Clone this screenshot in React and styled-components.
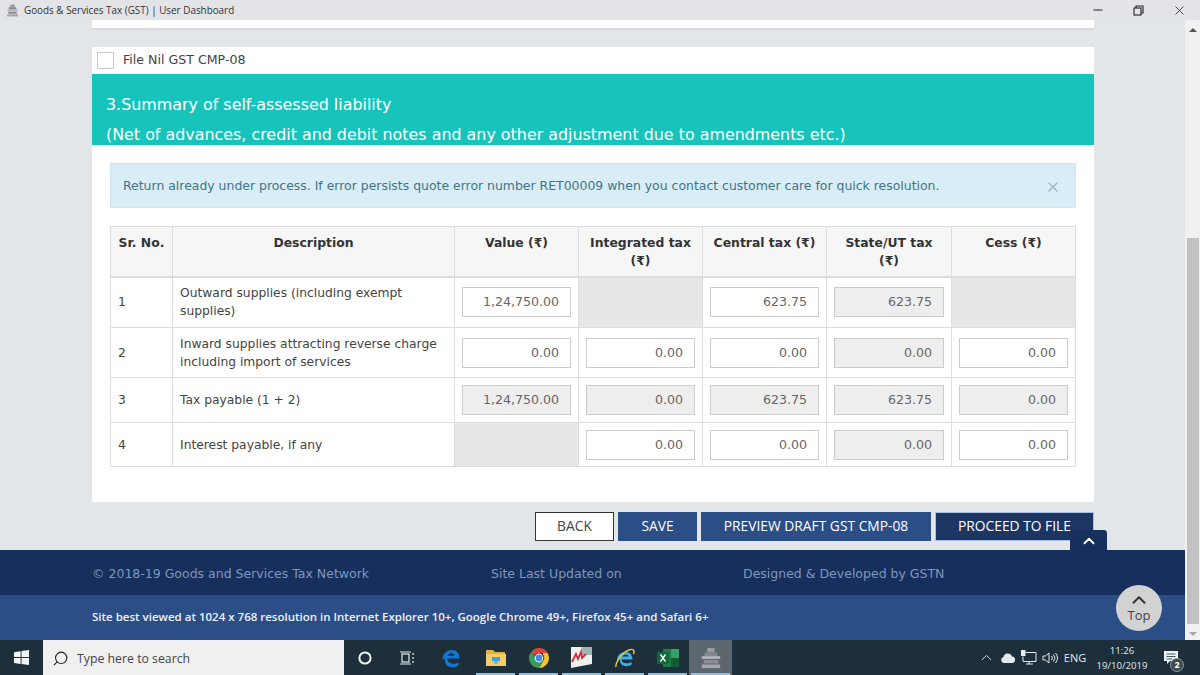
import React from 'react'
import styled, { createGlobalStyle } from 'styled-components'
import { ChevronUp, Search, Minus, X } from 'lucide-react'

const GlobalStyle = createGlobalStyle`
    html, body {
        margin: 0;
        padding: 0;
        height: 100%;
        overflow: hidden;
    }
    * {
        box-sizing: border-box;
    }
`

const rows = [
    {
        no: '1',
        desc: 'Outward supplies (including exempt supplies)',
        height: 51,
        cells: [['1,24,750.00'], null, ['623.75'], ['623.75', true], null],
    },
    {
        no: '2',
        desc: 'Inward supplies attracting reverse charge including import of services',
        height: 50,
        cells: [['0.00'], ['0.00'], ['0.00'], ['0.00', true], ['0.00']],
    },
    {
        no: '3',
        desc: 'Tax payable (1 + 2)',
        height: 45,
        cells: [['1,24,750.00', true], ['0.00', true], ['623.75', true], ['623.75', true], ['0.00', true]],
    },
    {
        no: '4',
        desc: 'Interest payable, if any',
        height: 44,
        cells: [null, ['0.00'], ['0.00'], ['0.00', true], ['0.00']],
    },
]

const headers = ['Sr. No.', 'Description', 'Value (₹)', 'Integrated tax (₹)', 'Central tax (₹)', 'State/UT tax (₹)', 'Cess (₹)']
const colWidths = [62, 282, 124, 124, 124, 125, 124]
const footerBits = ['© 2018-19 Goods and Services Tax Network', 'Site Last Updated on', 'Designed & Developed by GSTN']

function Emblem({ size }) {
    return (
        <svg width={size} height={size} viewBox="0 0 24 24">
            <rect x="8" y="1" width="8" height="5" fill="#9a9ca3" />
            <rect x="5" y="6" width="14" height="4" fill="#85878e" />
            <rect x="2" y="10" width="20" height="3" fill="#b5b7bc" />
            <rect x="4" y="14" width="16" height="4" fill="#8b8d94" />
            <rect x="2" y="19" width="20" height="4" fill="#a5a7ad" />
        </svg>
    )
}

function RestoreIcon() {
    return (
        <svg width="11" height="11" viewBox="0 0 11 11" fill="none" stroke="#222" strokeWidth="1.1">
            <rect x="1" y="3" width="7" height="7" />
            <path d="M3 3V1h7v7H8" />
        </svg>
    )
}

function WindowsLogo() {
    return (
        <svg width="15" height="15" viewBox="0 0 15 15" fill="#f2f5f6">
            <path d="M0 2.2 6.6 1.2v5.9H0zM7.5 1.1 15 0v7.1H7.5zM0 8h6.6v5.9L0 12.9zM7.5 8H15v7l-7.5-1.1z" />
        </svg>
    )
}

function CortanaIcon() {
    return (
        <svg width="16" height="16" viewBox="0 0 16 16" fill="none" stroke="#f0f3f4" strokeWidth="2">
            <circle cx="8" cy="8" r="5.6" />
        </svg>
    )
}

function TaskViewIcon() {
    return (
        <svg width="16" height="14" viewBox="0 0 16 14" fill="none" stroke="#e8ecee" strokeWidth="1.2">
            <rect x="3" y="3" width="7" height="8" />
            <path d="M1 1h11M1 13h11M14 2v2M14 6v2M14 10v2" />
        </svg>
    )
}

function EdgeIcon() {
    return (
        <svg width="22" height="22" viewBox="0 0 22 22" fill="none">
            <path d="M2.5 13C2.5 6.5 7 3 11.5 3c5 0 8 3.4 8 8.6H7.2c.2 5 6.8 6.6 11.2 3.6v3.6c-5.6 3-14.2 1.4-13.6-6.6C3.6 10.800 3 11.800 2.500 13z" fill="#0f78d4" />
            <path d="M7.500 8.800h7c0-3-4.800-3.800-7 0z" fill="#1c2e39" />
        </svg>
    )
}

function ExplorerIcon() {
    return (
        <svg width="20" height="18" viewBox="0 0 20 18">
            <path d="M0 1h7l2 2h10v3H0z" fill="#e2b33f" />
            <rect y="5" width="20" height="12" fill="#f3cf6b" />
            <rect x="6" y="8" width="8" height="4" fill="#3f9edb" />
            <rect x="8" y="12" width="4" height="3" fill="#6bbbe8" />
        </svg>
    )
}

function ChromeIcon() {
    return (
        <svg width="20" height="20" viewBox="0 0 20 20">
            <path d="M10 0a10 10 0 0 1 8.660 5H10a5 5 0 0 0-4.600 3L2.500 3.400A10 10 0 0 1 10 0z" fill="#d9453a" />
            <path d="M18.660 5A10 10 0 0 1 10 20l4.300-7.500A5 5 0 0 0 14 6.500V5z" fill="#f5c32c" />
            <path d="M10 20A10 10 0 0 1 2.500 3.400L6.800 11A5 5 0 0 0 14.300 12.500z" fill="#3a9b52" />
            <circle cx="10" cy="10" r="4.400" fill="#fff" />
            <circle cx="10" cy="10" r="3.400" fill="#4a87e8" />
        </svg>
    )
}

function MargIcon() {
    return (
        <svg width="21" height="21" viewBox="0 0 21 21">
            <path d="M0 0h21v17L0 21z" fill="#eef0ee" />
            <path d="M11 0h10v8H9z" fill="#9fb6b4" />
            <path d="M1 15 5 7l2 5 3-7 1 6 4-4" fill="none" stroke="#d22a35" strokeWidth="1.800" />
        </svg>
    )
}

function IEIcon() {
    return (
        <svg width="22" height="22" viewBox="0 0 22 22" fill="none">
            <path d="M3 14c0-6 4-9 8.500-9 4.500 0 7 3 7 7.500H7.500c.2 4 6 5 10 2.500v3c-5 2.500-12.500 1-11.500-6" fill="#3ab1e8" />
            <path d="M8 9.500h6.500c0-2.600-4.800-3-6.500 0z" fill="#1c2e39" />
            <path d="M2 20C1 17 7 6 15 3c4-1.500 6 0 4.500 4" stroke="#e9c643" strokeWidth="1.400" />
        </svg>
    )
}

function ExcelIcon() {
    return (
        <svg width="22" height="18" viewBox="0 0 22 18">
            <rect x="6" y="0" width="16" height="18" fill="#1f7a45" />
            <rect x="14" y="0" width="8" height="9" fill="#35a268" />
            <rect x="14" y="9" width="8" height="9" fill="#135c34" />
            <rect x="0" y="3" width="12" height="12" fill="#0f6a3a" />
            <path d="M3.500 5.500 8.500 12.500M8.500 5.500 3.500 12.500" stroke="#fff" strokeWidth="1.400" />
        </svg>
    )
}

function CloudIcon() {
    return (
        <svg width="16" height="10" viewBox="0 0 16 10" fill="#e6eaec">
            <path d="M4 10a3 3 0 0 1-.6-5.900A4.500 4.500 0 0 1 12 3.500 3.300 3.300 0 0 1 12.500 10z" />
        </svg>
    )
}

function NetworkIcon() {
    return (
        <svg width="16" height="15" viewBox="0 0 16 15" fill="none" stroke="#e6eaec" strokeWidth="1">
            <path d="M4.500 2.500H15v9H2v-5M8 11.500V14M5 14h7" />
            <rect x="0.500" y="0.500" width="3.500" height="5" fill="#e6eaec" />
        </svg>
    )
}

function VolumeIcon() {
    return (
        <svg width="16" height="14" viewBox="0 0 16 14" fill="none" stroke="#e6eaec" strokeWidth="1">
            <path d="M1 5h2.500L7 2v10L3.500 9H1zM9.500 5a3 3 0 0 1 0 4M11.500 3.500a5.500 5.500 0 0 1 0 7M13.500 2a8 8 0 0 1 0 10" />
        </svg>
    )
}

function NotificationIcon() {
    return (
        <svg width="14" height="14" viewBox="0 0 14 14">
            <path d="M0 0h14v10H6l-3 3v-3H0z" fill="#f0f3f4" />
            <path d="M2.500 3h9M2.500 5.500h9M2.500 8h6" stroke="#1c2e39" strokeWidth="0.800" />
        </svg>
    )
}

function App() {
    return (
        <Screen>
            <GlobalStyle />
            <TitleBar>
                <TitleLeft>
                    <Emblem size={13} />
                    <span>Goods &amp; Services Tax (GST) | User Dashboard</span>
                </TitleLeft>
                <WindowControls>
                    <WindowButton><Minus size={14} color="#222" /></WindowButton>
                    <WindowButton><RestoreIcon /></WindowButton>
                    <WindowButton><X size={15} color="#222" strokeWidth={1.3} /></WindowButton>
                </WindowControls>
            </TitleBar>

            <Viewport>
                <Page>
                    <Content>
                        <TopStrip />
                        <NilRow>
                            <CheckBox />
                            <NilLabel>File Nil GST CMP-08</NilLabel>
                        </NilRow>
                        <SectionHead>
                            <div>3.Summary of self-assessed liability</div>
                            <div>(Net of advances, credit and debit notes and any other adjustment due to amendments etc.)</div>
                        </SectionHead>
                        <Panel>
                            <Alert>
                                <span>Return already under process. If error persists quote error number RET00009 when you contact customer care for quick resolution.</span>
                                <X size={16} color="#a9b6bd" strokeWidth={2.4} />
                            </Alert>
                            <Table>
                                <colgroup>
                                    {colWidths.map((w, i) => <col key={i} width={w} />)}
                                </colgroup>
                                <thead>
                                    <tr>
                                        {headers.map(h => <Th key={h}>{h}</Th>)}
                                    </tr>
                                </thead>
                                <tbody>
                                    {rows.map(row => (
                                        <tr key={row.no} height={row.height}>
                                            <Td>{row.no}</Td>
                                            <Td>{row.desc}</Td>
                                            {row.cells.map((cell, i) => (
                                                <Td key={i} $blank={!cell}>
                                                    {cell && <Amount $locked={cell[1]}>{cell[0]}</Amount>}
                                                </Td>
                                            ))}
                                        </tr>
                                    ))}
                                </tbody>
                            </Table>
                        </Panel>
                        <Actions>
                            <ActionButton $kind="plain">BACK</ActionButton>
                            <ActionButton $width={79}>SAVE</ActionButton>
                            <ActionButton $width={230}>PREVIEW DRAFT GST CMP-08</ActionButton>
                            <ActionButton $kind="dark" $width={159}>PROCEED TO FILE</ActionButton>
                        </Actions>
                    </Content>

                    <Footer>
                        <BackTab><ChevronUp size={18} color="#fff" strokeWidth={2.5} /></BackTab>
                        <FooterTop>
                            {footerBits.map(t => <span key={t}>{t}</span>)}
                        </FooterTop>
                        <FooterBottom>
                            Site best viewed at 1024 x 768 resolution in Internet Explorer 10+, Google Chrome 49+, Firefox 45+ and Safari 6+
                            <TopCircle>
                                <ChevronUp size={22} color="#333" strokeWidth={2.2} />
                                <span>Top</span>
                            </TopCircle>
                        </FooterBottom>
                    </Footer>
                </Page>
                <ScrollBar>
                    <ScrollArrow $up />
                    <ScrollThumb />
                    <ScrollArrow />
                </ScrollBar>
            </Viewport>

            <TaskBar>
                <StartButton><WindowsLogo /></StartButton>
                <SearchBox>
                    <Search size={17} color="#222" strokeWidth={1.5} style={{ transform: 'scaleX(-1)' }} />
                    <span>Type here to search</span>
                </SearchBox>
                <TaskSlot $width={42}><CortanaIcon /></TaskSlot>
                <TaskSlot $width={42}><TaskViewIcon /></TaskSlot>
                <TaskSlot $width={46}><EdgeIcon /></TaskSlot>
                <TaskSlot $running><ExplorerIcon /></TaskSlot>
                <TaskSlot $running><ChromeIcon /></TaskSlot>
                <TaskSlot $running><MargIcon /></TaskSlot>
                <TaskSlot $running><IEIcon /></TaskSlot>
                <TaskSlot $running><ExcelIcon /></TaskSlot>
                <TaskSlot $running $active><Emblem size={22} /></TaskSlot>
                <Tray>
                    <TrayItem><ChevronUp size={17} color="#e6eaec" strokeWidth={1.3} /></TrayItem>
                    <TrayItem><CloudIcon /></TrayItem>
                    <TrayItem><NetworkIcon /></TrayItem>
                    <TrayItem><VolumeIcon /></TrayItem>
                    <Lang>ENG</Lang>
                    <Clock>
                        <span>11:26</span>
                        <span>19/10/2019</span>
                    </Clock>
                    <Notify>
                        <NotificationIcon />
                        <NotifyBadge>2</NotifyBadge>
                    </Notify>
                </Tray>
            </TaskBar>
        </Screen>
    )
}

const Screen = styled.div`
    width: 1200px;
    height: 675px;
    display: flex;
    flex-direction: column;
    overflow: hidden;
    background: #e3e6e9;
    font-family: 'DejaVu Sans', Verdana, sans-serif;
`

const TitleBar = styled.div`
    height: 20px;
    flex: none;
    display: flex;
    justify-content: space-between;
    align-items: center;
    background: #e2e4e7;
    padding-left: 6px;
    font-family: 'Open Sans', 'Noto Sans', sans-serif;
    font-size: 9.9px;
    color: #333;
`

const TitleLeft = styled.div`
    display: flex;
    align-items: center;
    gap: 5px;
`

const WindowControls = styled.div`
    display: flex;
`

const WindowButton = styled.div`
    width: 41px;
    height: 20px;
    display: flex;
    align-items: center;
    justify-content: center;
`

const Viewport = styled.div`
    flex: 1;
    min-height: 0;
    display: flex;
`

const Page = styled.div`
    width: 1185px;
    display: flex;
    flex-direction: column;
`

const Content = styled.div`
    flex: 1;
    padding: 0 91px 0 92px;
`

const TopStrip = styled.div`
    height: 9px;
    background: #fff;
    border-bottom: 1px solid #d8dadd;
    margin-bottom: 18px;
    box-shadow: 0 1px 0 #d8dadd;
`

const NilRow = styled.div`
    height: 27px;
    background: #fff;
    display: flex;
    align-items: center;
    gap: 9px;
    padding-left: 5px;
    font-size: 12.6px;
    color: #444;
`

const NilLabel = styled.span`
    margin-bottom: 2px;
`

const CheckBox = styled.div`
    width: 17px;
    height: 17px;
    border: 1px solid #ccc;
    background: #fff;
`

const SectionHead = styled.div`
    height: 71px;
    background: #17c4bb;
    color: #fff;
    padding: 16px 14px 0;
    font-size: 15.9px;
    line-height: 30px;
`

const Panel = styled.div`
    height: 357px;
    background: #fff;
    padding: 18px 18px 0;
`

const Alert = styled.div`
    height: 45px;
    display: flex;
    justify-content: space-between;
    align-items: center;
    padding: 0 14px 0 12px;
    margin-bottom: 18px;
    background: #d9edf7;
    border: 1px solid #cfe6f2;
    color: #3f7488;
    font-size: 12.45px;

    svg {
        margin-top: 3px;
    }
`

const Table = styled.table`
    width: 965px;
    table-layout: fixed;
    border-collapse: collapse;
    font-size: 12.3px;
    color: #444;
`

const Th = styled.th`
    height: 50px;
    background: #f6f6f6;
    border: 1px solid #ddd;
    border-bottom-width: 2px;
    padding: 7px 7.500px 0;
    vertical-align: top;
    line-height: 18px;
    font-size: 12.4px;
    color: #333;
    text-align: center;
`

const Td = styled.td`
    border: 1px solid #ddd;
    padding: 0 7px;
    line-height: 18px;
    vertical-align: middle;
    background: ${p => (p.$blank ? '#e7e7e7' : '#fff')};
`

const Amount = styled.div`
    height: 30px;
    line-height: 28px;
    text-align: right;
    padding-right: 11px;
    border: 1px solid #ccc;
    background: ${p => (p.$locked ? '#eeeeee' : '#fff')};
    color: #666;
    font-size: 12.6px;
`

const Actions = styled.div`
    height: 48px;
    display: flex;
    justify-content: flex-end;
    align-items: flex-start;
    gap: 4px;
    padding-top: 10px;
`

const buttonBg = { plain: '#fff', dark: '#1d3562', normal: '#2c4e86' }

const ActionButton = styled.div`
    width: ${p => p.$width || 79}px;
    height: 29px;
    display: flex;
    align-items: center;
    justify-content: center;
    padding-bottom: 2px;
    font-family: 'Open Sans', 'Noto Sans', sans-serif;
    font-size: 13.8px;
    background: ${p => buttonBg[p.$kind] || buttonBg.normal};
    color: ${p => (p.$kind === 'plain' ? '#444' : '#fff')};
    border: 1px solid ${p => (p.$kind === 'plain' ? '#333' : p.$kind === 'dark' ? '#a9c0e6' : '#2c4e86')};
`

const Footer = styled.div`
    position: relative;
    flex: none;
`

const BackTab = styled.div`
    position: absolute;
    top: -20px;
    left: 1070px;
    width: 37px;
    height: 21px;
    background: #162f5d;
    border-radius: 3px 3px 0 0;
    display: flex;
    align-items: center;
    justify-content: center;
`

const FooterTop = styled.div`
    height: 45px;
    background: #162f5d;
    display: grid;
    grid-template-columns: 399px 252px 1fr;
    align-items: center;
    padding: 1px 0 0 92px;
    color: #7f97ba;
    font-size: 12.5px;
`

const FooterBottom = styled.div`
    position: relative;
    height: 45px;
    background: #2c4e86;
    display: flex;
    align-items: center;
    padding: 0 0 2px 92px;
    color: #eef2f8;
    font-family: 'Open Sans', 'Noto Sans', sans-serif;
    font-size: 11.5px;
    font-weight: 600;
`

const TopCircle = styled.div`
    position: absolute;
    left: 1116px;
    top: -10px;
    width: 46px;
    height: 46px;
    border-radius: 50%;
    background: #d2d2d2;
    display: flex;
    flex-direction: column;
    align-items: center;
    color: #444;
    font-size: 13px;
    font-weight: 400;
    line-height: 14px;

    svg {
        margin-top: 4px;
        margin-bottom: -3px;
    }
`

const ScrollBar = styled.div`
    width: 15px;
    flex: none;
    display: flex;
    flex-direction: column;
    align-items: center;
    background: #f1f1f1;
    padding: 8px 0 4px;
`

const ScrollArrow = styled.div`
    width: 0;
    height: 0;
    border-left: 4px solid transparent;
    border-right: 4px solid transparent;
    ${p => (p.$up
        ? 'border-bottom: 4px solid #555;'
        : 'border-top: 4px solid #a6a6a6;')}
`

const ScrollThumb = styled.div`
    width: 12px;
    height: 386px;
    background: #c1c1c1;
    margin: auto 0 8px;
`

const TaskBar = styled.div`
    height: 35px;
    flex: none;
    display: flex;
    background: #1c2f3a;
    font-family: 'Open Sans', 'Noto Sans', sans-serif;
`

const StartButton = styled.div`
    width: 43px;
    display: flex;
    align-items: center;
    justify-content: center;
`

const SearchBox = styled.div`
    width: 301px;
    display: flex;
    align-items: center;
    gap: 8px;
    padding: 1px 0 0 9px;
    background: #f0f0f0;
    color: #444;
    font-size: 12.3px;
`

const TaskSlot = styled.div`
    position: relative;
    width: ${p => p.$width || 43}px;
    display: flex;
    align-items: center;
    justify-content: center;
    background: ${p => (p.$active ? '#5b666e' : 'transparent')};

    ${p => p.$running && `
        &:after {
            content: '';
            position: absolute;
            left: 2px;
            right: 2px;
            bottom: 0;
            height: 2px;
            background: #8fc0e0;
        }
    `}
`

const Tray = styled.div`
    margin-left: auto;
    display: flex;
    align-items: center;
    padding-right: 13px;
    color: #e6eaec;
    font-size: 11px;
`

const TrayItem = styled.div`
    width: 21px;
    display: flex;
    justify-content: center;
`

const Lang = styled.div`
    width: 28px;
    text-align: center;
    margin-left: 1px;
`

const Clock = styled.div`
    width: 66px;
    display: flex;
    flex-direction: column;
    align-items: center;
    font-size: 9.6px;
    line-height: 15px;
`

const Notify = styled.div`
    position: relative;
    width: 32px;
    display: flex;
    justify-content: center;
`

const NotifyBadge = styled.div`
    position: absolute;
    left: 15px;
    top: 7px;
    width: 14px;
    height: 14px;
    border-radius: 50%;
    background: #3c4a53;
    border: 1px solid #8d979d;
    font-size: 9px;
    font-weight: 700;
    line-height: 12px;
    text-align: center;
    color: #fff;
`

export default App
